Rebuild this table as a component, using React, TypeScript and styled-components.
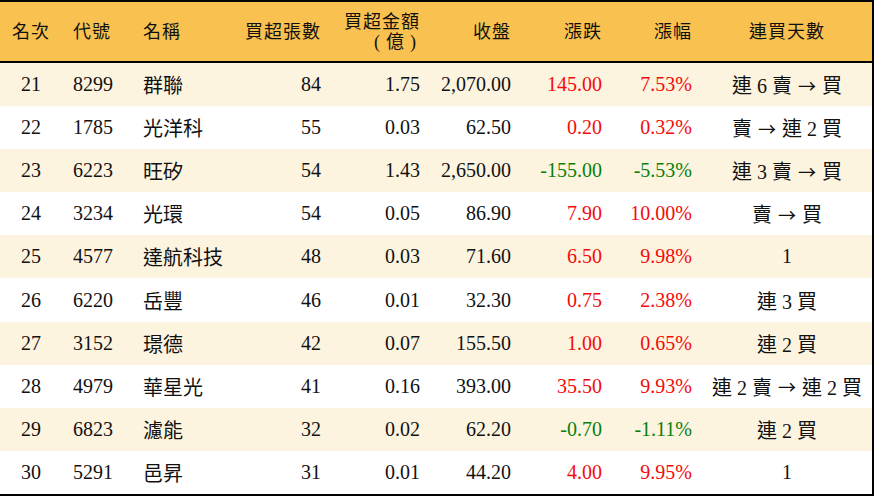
import React from "react";
import styled, { createGlobalStyle, css } from "styled-components";

const GlobalStyle = createGlobalStyle`
  html, body {
    margin: 0;
    padding: 0;
    background: #ffffff;
  }
  body {
    font-family: "Liberation Serif", "Noto Sans CJK TC", serif;
  }
`;

const COLUMNS = "62px 70px 98px 101px 99px 91px 91px 90px 170px";

type Align = "center" | "left" | "right";

const flexEdge = (a: Align) =>
  a === "right" ? "flex-end" : a === "left" ? "flex-start" : "center";

const cellPadding = (a: Align) => css`
  text-align: ${a};
  padding-left: ${a === "left" ? "11px" : "0"};
  padding-right: ${a === "right" ? "10px" : "0"};
`;

const Board = styled.div`
  width: 872px;
  height: 492px;
  border-top: 2px solid #000;
  border-bottom: 2px solid #000;
  border-right: 2px solid #000;
  display: flex;
  flex-direction: column;
  color: #111;
`;

const HeadRow = styled.div`
  display: grid;
  grid-template-columns: ${COLUMNS};
  height: 59px;
  background: #f8c150;
  border-bottom: 2px solid #000;
`;

const Body = styled.div`
  flex: 1;
  display: grid;
  grid-template-rows: repeat(10, 1fr);
`;

const Row = styled.div<{ $shade: boolean }>`
  display: grid;
  grid-template-columns: ${COLUMNS};
  background: ${(p) => (p.$shade ? "#fdf4e0" : "#ffffff")};
`;

const HeadCell = styled.div<{ $align: Align }>`
  display: flex;
  flex-direction: column;
  justify-content: center;
  align-items: ${(p) => flexEdge(p.$align)};
  font-size: 18px;
  line-height: 20px;
  letter-spacing: 1px;
  ${(p) => cellPadding(p.$align)}
`;

const SubLabel = styled.span`
  letter-spacing: 6px;
  margin-right: -2px;
`;

const Cell = styled.div<{ $align: Align; $tone?: "up" | "down" }>`
  display: flex;
  align-items: center;
  justify-content: ${(p) => flexEdge(p.$align)};
  font-size: 20px;
  white-space: pre;
  color: ${(p) =>
    p.$tone === "up" ? "#f50a0a" : p.$tone === "down" ? "#0a7f0a" : "#111"};
  ${(p) => cellPadding(p.$align)}
`;

const Arrow = styled.span`
  font-family: "Noto Sans CJK TC", sans-serif;
  font-size: 18px;
  padding: 0 1px;
`;

const headers: { label: string; sub?: string; align: Align }[] = [
  { label: "名次", align: "center" },
  { label: "代號", align: "left" },
  { label: "名稱", align: "left" },
  { label: "買超張數", align: "right" },
  { label: "買超金額", sub: "(億)", align: "right" },
  { label: "收盤", align: "right" },
  { label: "漲跌", align: "right" },
  { label: "漲幅", align: "right" },
  { label: "連買天數", align: "center" },
];

type Stock = {
  rank: number;
  code: string;
  name: string;
  lots: number;
  amount: string;
  close: string;
  change: string;
  pct: string;
  streak: string;
};

const stocks: Stock[] = [
  { rank: 21, code: "8299", name: "群聯", lots: 84, amount: "1.75", close: "2,070.00", change: "145.00", pct: "7.53%", streak: "連 6 賣 → 買" },
  { rank: 22, code: "1785", name: "光洋科", lots: 55, amount: "0.03", close: "62.50", change: "0.20", pct: "0.32%", streak: "賣 → 連 2 買" },
  { rank: 23, code: "6223", name: "旺矽", lots: 54, amount: "1.43", close: "2,650.00", change: "-155.00", pct: "-5.53%", streak: "連 3 賣 → 買" },
  { rank: 24, code: "3234", name: "光環", lots: 54, amount: "0.05", close: "86.90", change: "7.90", pct: "10.00%", streak: "賣 → 買" },
  { rank: 25, code: "4577", name: "達航科技", lots: 48, amount: "0.03", close: "71.60", change: "6.50", pct: "9.98%", streak: "1" },
  { rank: 26, code: "6220", name: "岳豐", lots: 46, amount: "0.01", close: "32.30", change: "0.75", pct: "2.38%", streak: "連 3 買" },
  { rank: 27, code: "3152", name: "璟德", lots: 42, amount: "0.07", close: "155.50", change: "1.00", pct: "0.65%", streak: "連 2 買" },
  { rank: 28, code: "4979", name: "華星光", lots: 41, amount: "0.16", close: "393.00", change: "35.50", pct: "9.93%", streak: "連 2 賣 → 連 2 買" },
  { rank: 29, code: "6823", name: "濾能", lots: 32, amount: "0.02", close: "62.20", change: "-0.70", pct: "-1.11%", streak: "連 2 買" },
  { rank: 30, code: "5291", name: "邑昇", lots: 31, amount: "0.01", close: "44.20", change: "4.00", pct: "9.95%", streak: "1" },
];

const Streak = ({ text }: { text: string }) => {
  const parts = text.split("→");
  return (
    <>
      {parts.map((part, i) => (
        <React.Fragment key={i}>
          {i > 0 && <Arrow>→</Arrow>}
          {part}
        </React.Fragment>
      ))}
    </>
  );
};

const App = () => {
  return (
    <>
      <GlobalStyle />
      <Board>
        <HeadRow>
          {headers.map((h) => (
            <HeadCell key={h.label} $align={h.align}>
              <span>{h.label}</span>
              {h.sub && <SubLabel>{h.sub}</SubLabel>}
            </HeadCell>
          ))}
        </HeadRow>
        <Body>
          {stocks.map((s, i) => {
            const tone = s.change.startsWith("-") ? "down" : "up";
            return (
              <Row key={s.code} $shade={i % 2 === 0}>
                <Cell $align="center">{s.rank}</Cell>
                <Cell $align="left">{s.code}</Cell>
                <Cell $align="left">{s.name}</Cell>
                <Cell $align="right">{s.lots}</Cell>
                <Cell $align="right">{s.amount}</Cell>
                <Cell $align="right">{s.close}</Cell>
                <Cell $align="right" $tone={tone}>
                  {s.change}
                </Cell>
                <Cell $align="right" $tone={tone}>
                  {s.pct}
                </Cell>
                <Cell $align="center">
                  <Streak text={s.streak} />
                </Cell>
              </Row>
            );
          })}
        </Body>
      </Board>
    </>
  );
};

export default App;
